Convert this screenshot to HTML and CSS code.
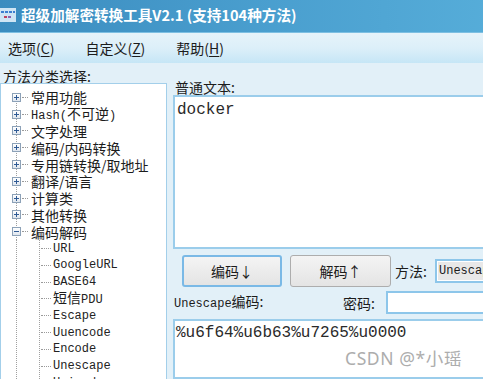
FILE: index.html
```html
<!DOCTYPE html>
<html lang="zh-CN">
<head>
<meta charset="utf-8">
<title>超级加解密转换工具V2.1</title>
<link rel="stylesheet" href="styles.css">
</head>
<body>
<div class="window">
  <div class="titlebar">
    <svg class="appicon" width="16" height="20" viewBox="0 0 16 20">
      <rect x="0" y="3" width="16" height="14" fill="#cfe5f4"/>
      <rect x="1" y="6" width="3" height="2" fill="#3d7fd0"/>
      <rect x="5" y="6" width="3" height="2" fill="#3d7fd0"/>
      <rect x="9" y="6" width="3" height="2" fill="#3d7fd0"/>
      <rect x="13" y="6" width="2" height="2" fill="#3d7fd0"/>
      <rect x="4" y="11" width="3" height="2" fill="#c0405a"/>
      <rect x="8" y="11" width="3" height="2" fill="#8a5fb0"/>
    </svg>
    <span class="title">超级加解密转换工具V2.1 (支持104种方法)</span>
  </div>
  <div class="menubar">
    <span class="menu">选项(<u>C</u>)</span>
    <span class="menu">自定义(<u>Z</u>)</span>
    <span class="menu">帮助(<u>H</u>)</span>
  </div>
  <div class="main">
    <div class="left">
      <div class="lbl-left">方法分类选择:</div>
      <div class="treebox">
        <ul class="tree">
          <li><div class="row"><span class="pm plus"></span><span class="hl"></span><span class="txt">常用功能</span></div></li>
          <li><div class="row"><span class="pm plus"></span><span class="hl"></span><span class="txt"><span class="m">Hash(</span>不可逆<span class="m">)</span></span></div></li>
          <li><div class="row"><span class="pm plus"></span><span class="hl"></span><span class="txt">文字处理</span></div></li>
          <li><div class="row"><span class="pm plus"></span><span class="hl"></span><span class="txt">编码/内码转换</span></div></li>
          <li><div class="row"><span class="pm plus"></span><span class="hl"></span><span class="txt">专用链转换/取地址</span></div></li>
          <li><div class="row"><span class="pm plus"></span><span class="hl"></span><span class="txt">翻译/语言</span></div></li>
          <li><div class="row"><span class="pm plus"></span><span class="hl"></span><span class="txt">计算类</span></div></li>
          <li><div class="row"><span class="pm plus"></span><span class="hl"></span><span class="txt">其他转换</span></div></li>
          <li>
            <div class="row"><span class="pm"></span><span class="hl"></span><span class="txt">编码解码</span></div>
            <ul class="children">
              <li class="leaf"><span class="hl2"></span><span class="m">URL</span></li>
              <li class="leaf"><span class="hl2"></span><span class="m">GoogleURL</span></li>
              <li class="leaf"><span class="hl2"></span><span class="m">BASE64</span></li>
              <li class="leaf"><span class="hl2"></span><span class="txt">短信<span class="m">PDU</span></span></li>
              <li class="leaf"><span class="hl2"></span><span class="m">Escape</span></li>
              <li class="leaf"><span class="hl2"></span><span class="m">Uuencode</span></li>
              <li class="leaf"><span class="hl2"></span><span class="m">Encode</span></li>
              <li class="leaf"><span class="hl2"></span><span class="m">Unescape</span></li>
              <li class="leaf"><span class="hl2"></span><span class="m">Unicode</span></li>
            </ul>
          </li>
        </ul>
      </div>
    </div>
    <div class="right">
      <div class="lbl-top">普通文本:</div>
      <div class="textbox plain">docker</div>
      <div class="btnrow">
        <button class="btn focus">编码↓</button>
        <button class="btn second">解码↑</button>
        <span class="lbl-method">方法:</span>
        <div class="select"><span class="m">Unescape</span></div>
      </div>
      <div class="inrow">
        <span class="lbl-out"><span class="m">Unescape</span>编码:</span>
        <span class="lbl-pwd">密码:</span>
        <div class="input"></div>
      </div>
      <div class="textbox output">%u6f64%u6b63%u7265%u0000</div>
    </div>
  </div>
  <div class="watermark">CSDN @*小瑶</div>
</div>
</body>
</html>
```
FILE: styles.css
```css
html, body {
  margin: 0;
  padding: 0;
  overflow: hidden;
  background: #e2f0f8;
}
body {
  font-family: "Noto Sans CJK SC", "Noto Sans", sans-serif;
  color: #1c1c1c;
}
.window {
  position: relative;
  width: 495px;
  height: 379px;
  overflow: hidden;
  display: flex;
  flex-direction: column;
}
.m {
  font-family: "Liberation Mono", "Noto Sans CJK SC", monospace;
  font-size: 12px;
}
.titlebar {
  height: 32px;
  flex: none;
  display: flex;
  align-items: center;
  background: linear-gradient(to right, #3b8cbf, #4a9fcf 55%, #56add9);
  border-bottom: 1px solid #7dbfe2;
}
.appicon {
  flex: none;
  margin-top: -2px;
}
.title {
  margin-left: 5px;
  margin-top: -2px;
  color: #ffffff;
  font-weight: bold;
  font-size: 14.6px;
  line-height: 16px;
}
.menubar {
  height: 30px;
  flex: none;
  display: flex;
  align-items: center;
  padding-left: 8px;
  background: linear-gradient(#e6f3fa, #dcefF9 50%, #c6e6f6);
  font-size: 14px;
  line-height: 16px;
}
.menu {
  margin-right: 31px;
}
.menu u {
  text-decoration-thickness: 1px;
  text-underline-offset: 2px;
}
.main {
  flex: 1;
  display: flex;
  min-height: 0;
}
.left {
  width: 167px;
  flex: none;
  display: flex;
  flex-direction: column;
}
.lbl-left {
  height: 25px;
  box-sizing: border-box;
  padding: 6px 0 0 3px;
  font-size: 14px;
  line-height: 14px;
}
.treebox {
  flex: 1;
  background: #ffffff;
  border: 1px solid #a3cfea;
  border-bottom: none;
}
.tree, .children {
  list-style: none;
  margin: 0;
  padding: 0;
}
.tree {
  padding-top: 5px;
  background-image: repeating-linear-gradient(to bottom, #a0a0a0 0 1px, transparent 1px 2px);
  background-size: 1px 100%;
  background-position: 15px 13px;
  background-repeat: no-repeat;
}
.row {
  height: 16.8px;
  display: flex;
  align-items: center;
  padding-left: 11px;
}
.pm {
  position: relative;
  flex: none;
  width: 9px;
  height: 9px;
  box-sizing: border-box;
  border: 1px solid #8da2b8;
  background: linear-gradient(#ffffff, #dfe6ee);
}
.pm::before {
  content: "";
  position: absolute;
  left: 1px;
  top: 3px;
  width: 5px;
  height: 1px;
  background: #2f5a94;
}
.plus::after {
  content: "";
  position: absolute;
  left: 3px;
  top: 1px;
  width: 1px;
  height: 5px;
  background: #2f5a94;
}
.hl {
  width: 6px;
  margin: 0 3px 0 1px;
  border-top: 1px dotted #9a9a9a;
  flex: none;
}
.txt {
  font-size: 14px;
  line-height: 16px;
  white-space: nowrap;
}
.children {
  background-color: #ffffff;
  background-image:
    repeating-linear-gradient(to bottom, #a0a0a0 0 1px, transparent 1px 2px),
    repeating-linear-gradient(to bottom, #a0a0a0 0 1px, transparent 1px 2px);
  background-size: 1px 100%, 1px 100%;
  background-position: 15px 0, 38px 0;
  background-repeat: no-repeat;
}
.leaf {
  height: 16.8px;
  display: flex;
  align-items: center;
  padding-left: 40px;
  white-space: nowrap;
}
.hl2 {
  width: 10px;
  margin-right: 2px;
  border-top: 1px dotted #9a9a9a;
  flex: none;
}
.leaf .m {
  font-size: 12px;
  color: #222;
}
.right {
  flex: 1;
  margin-left: 6px;
  display: flex;
  flex-direction: column;
  min-width: 0;
}
.lbl-top {
  height: 32px;
  box-sizing: border-box;
  display: flex;
  align-items: flex-end;
  padding: 0 0 1px 2px;
  font-size: 14px;
  line-height: 14px;
}
.textbox {
  background: #ffffff;
  border: 2px solid #9bcdeb;
  box-sizing: border-box;
  font-family: "Liberation Mono", monospace;
  font-size: 16px;
  line-height: 18px;
  color: #2a2a2a;
}
.plain {
  height: 154px;
  flex: none;
  padding: 4px 2px;
}
.btnrow {
  margin-top: 6px;
  height: 32px;
  flex: none;
  display: flex;
  align-items: center;
}
.btn {
  height: 32px;
  box-sizing: border-box;
  border: 1px solid #adadad;
  border-radius: 3px;
  background: linear-gradient(#f4f4f4, #e4e4e4);
  font-family: "Noto Sans CJK SC", sans-serif;
  font-size: 14px;
  line-height: 16px;
  color: #1c1c1c;
  padding: 0;
}
.btn.focus {
  margin-left: 9px;
  width: 104px;
  border: 2px solid #7ab9e6;
}
.btn.second {
  margin-left: 8px;
  width: 105px;
}
.lbl-method {
  width: 40px;
  margin-left: 4px;
  font-size: 14px;
  line-height: 16px;
  flex: none;
}
.select {
  width: 60px;
  height: 24px;
  box-sizing: border-box;
  border: 2px solid #8dc6ea;
  background: #e8e8e8;
  box-shadow: inset 0 0 0 1px #ffffff;
  display: flex;
  align-items: center;
  padding-left: 2px;
  flex: none;
}
.select .m {
  font-size: 12px;
}
.inrow {
  margin-top: 4px;
  height: 23px;
  flex: none;
  display: flex;
  align-items: center;
}
.lbl-out {
  width: 169px;
  margin-left: 1px;
  font-size: 14px;
  line-height: 16px;
  flex: none;
  white-space: nowrap;
}
.lbl-out .m {
  font-size: 12px;
}
.lbl-pwd {
  width: 43px;
  font-size: 14px;
  line-height: 16px;
  flex: none;
}
.input {
  flex: 1;
  height: 23px;
  box-sizing: border-box;
  border: 2px solid #8dc6ea;
  background: #ffffff;
}
.output {
  margin-top: 5px;
  flex: 1;
  padding: 3px 1px;
}
.watermark {
  position: absolute;
  left: 345px;
  top: 347px;
  font-family: "Noto Sans", "Noto Sans CJK SC", sans-serif;
  font-size: 17.5px;
  line-height: 22px;
  letter-spacing: 0.6px;
  color: #adadad;
  white-space: nowrap;
}
```
